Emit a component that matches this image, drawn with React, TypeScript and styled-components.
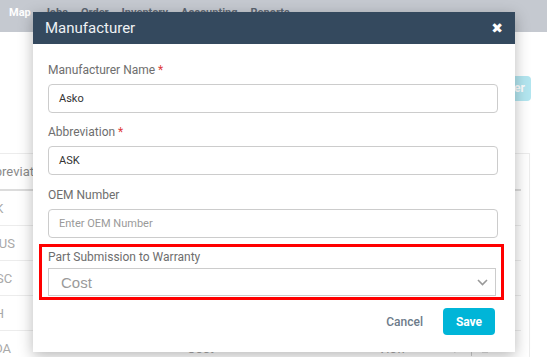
import React from 'react'
import styled, { createGlobalStyle } from 'styled-components'

const GlobalStyle = createGlobalStyle`
  html, body {
    margin: 0;
    padding: 0;
    background: #ffffff;
  }
  body {
    font-family: Roboto, "Liberation Sans", Arial, sans-serif;
  }
`

const Page = styled.div`
  position: relative;
  width: 547px;
  height: 357px;
  overflow: hidden;
  background: #ffffff;
`

const NavBar = styled.nav`
  display: flex;
  align-items: flex-start;
  gap: 13px;
  height: 32px;
  padding: 5px 0 0 9px;
  box-sizing: border-box;
  background: #c5c9d0;
`

const NavItem = styled.span<{ $active?: boolean }>`
  font-size: 11px;
  font-weight: 700;
  line-height: 16px;
  color: ${(p) => (p.$active ? '#ffffff' : '#5b6570')};
`

const Toolbar = styled.div`
  display: flex;
  justify-content: flex-end;
  padding: 44px 16px 0 0;
`

const AddButton = styled.div`
  height: 25px;
  padding: 0 6px 0 10px;
  border-radius: 4px;
  background: #b3e6f0;
  color: #ffffff;
  font-size: 12px;
  font-weight: 700;
  line-height: 25px;
`

const Card = styled.div`
  margin: 52px 17px 0 -38px;
  padding: 0 8px;
  border: 1px solid #ececec;
  background: #ffffff;
`

const Row = styled.div<{ $head?: boolean }>`
  display: grid;
  grid-template-columns: 208px 191px 75px 1fr;
  height: ${(p) => (p.$head ? '35px' : '34px')};
  align-items: center;
  border-bottom: ${(p) => (p.$head ? '2px solid #dcdcdc' : '1px solid #ececec')};
`

const Cell = styled.div<{ $head?: boolean }>`
  padding: 0 8px;
  font-size: 13px;
  color: ${(p) => (p.$head ? '#8a8a8a' : '#a9a9a9')};
  white-space: nowrap;
  overflow: hidden;
`

const Actions = styled.div`
  display: flex;
  align-items: center;
  gap: 8px;
  padding: 0 8px;
  color: #b5b5b5;
`

const Divider = styled.span`
  width: 1px;
  height: 16px;
  background: #cfcfcf;
`

const Modal = styled.div`
  position: absolute;
  left: 33px;
  top: 12px;
  width: 482px;
  height: 340px;
  background: #ffffff;
  box-shadow: 0 4px 14px rgba(0, 0, 0, 0.28);
  display: flex;
  flex-direction: column;
`

const ModalHeader = styled.div`
  display: flex;
  align-items: center;
  justify-content: space-between;
  height: 32px;
  padding: 0 12px 0 12px;
  background: #34495e;
`

const Title = styled.h4`
  margin: 0;
  font-size: 15px;
  font-weight: 400;
  color: #eef1f4;
`

const Close = styled.span`
  font-family: "DejaVu Sans", sans-serif;
  font-size: 14px;
  color: #ffffff;
  line-height: 1;
`

const ModalBody = styled.div`
  display: flex;
  flex-direction: column;
  padding: 18px 17px 0 15px;
`

const Field = styled.div<{ $gap?: number }>`
  display: flex;
  flex-direction: column;
  margin-bottom: ${(p) => p.$gap ?? 11}px;
`

const Label = styled.label`
  font-size: 12px;
  line-height: 16px;
  color: #6e6e6e;
  margin-bottom: 6px;
`

const Req = styled.span`
  color: #e03b3b;
`

const Input = styled.div<{ $placeholder?: boolean }>`
  height: 29px;
  box-sizing: border-box;
  border: 1px solid #cccccc;
  border-radius: 4px;
  padding: 0 10px;
  display: flex;
  align-items: center;
  font-size: 11px;
  color: ${(p) => (p.$placeholder ? '#9a9a9a' : '#333333')};
`

const Highlight = styled.div`
  margin: 0 -6px 0 -9px;
  padding: 2px 5px 1px 6px;
  border: 3px solid #ff0000;
  display: flex;
  flex-direction: column;
`

const HighlightLabel = styled(Label)`
  margin-bottom: 3px;
`

const Select = styled.div`
  height: 28px;
  box-sizing: border-box;
  border: 1px solid #cccccc;
  display: flex;
  align-items: center;
  justify-content: space-between;
  padding: 0 7px 0 12px;
  font-family: "Liberation Sans", Arial, sans-serif;
  font-size: 15px;
  color: #9a9a9a;
`

const Footer = styled.div`
  display: flex;
  justify-content: flex-end;
  align-items: center;
  gap: 20px;
  padding: 8px 20px 0 0;
`

const CancelButton = styled.span`
  font-size: 12px;
  font-weight: 500;
  color: #6d7b8a;
`

const SaveButton = styled.div`
  width: 52px;
  height: 27px;
  border-radius: 4px;
  background: #00b5d8;
  color: #ffffff;
  font-size: 12px;
  font-weight: 700;
  display: flex;
  align-items: center;
  justify-content: center;
`

const rows = [
  { abbr: 'ASK', sub: 'Cost', view: 'View' },
  { abbr: 'AMUS', sub: 'Cost', view: 'View' },
  { abbr: 'BOSC', sub: 'Cost', view: 'View' },
  { abbr: 'BSH', sub: 'Cost', view: 'View' },
  { abbr: 'FRDA', sub: 'Cost', view: 'View' },
]

const Chevron = () => (
  <svg width="11" height="7" viewBox="0 0 11 7">
    <polyline points="1,1 5.5,5.5 10,1" fill="none" stroke="#999999" strokeWidth="1.6" />
  </svg>
)

const Pencil = () => (
  <svg width="10" height="10" viewBox="0 0 10 10">
    <path d="M1 9 L1.5 6.5 L7 1 L9 3 L3.5 8.5 Z" fill="none" stroke="#bbbbbb" strokeWidth="1" />
  </svg>
)

const Trash = () => (
  <svg width="10" height="10" viewBox="0 0 10 10">
    <rect x="2" y="3" width="6" height="6.5" fill="#c4c4c4" />
    <rect x="1" y="1.5" width="8" height="1" fill="#c4c4c4" />
  </svg>
)

const App: React.FC = () => {
  return (
    <Page>
      <GlobalStyle />
      <NavBar>
        <NavItem $active>Map</NavItem>
        <NavItem>Jobs</NavItem>
        <NavItem>Order</NavItem>
        <NavItem>Inventory</NavItem>
        <NavItem>Accounting</NavItem>
        <NavItem>Reports</NavItem>
      </NavBar>

      <Toolbar>
        <AddButton>Add Manufacturer</AddButton>
      </Toolbar>

      <Card>
        <Row $head>
          <Cell $head>Abbreviation</Cell>
          <Cell $head>Part Submission</Cell>
          <Cell $head>Detail</Cell>
          <Cell $head>Action</Cell>
        </Row>
        {rows.map((r) => (
          <Row key={r.abbr}>
            <Cell>{r.abbr}</Cell>
            <Cell>{r.sub}</Cell>
            <Cell>{r.view}</Cell>
            <Actions>
              <Pencil />
              <Divider />
              <Trash />
            </Actions>
          </Row>
        ))}
      </Card>

      <Modal>
        <ModalHeader>
          <Title>Manufacturer</Title>
          <Close>✖</Close>
        </ModalHeader>
        <ModalBody>
          <Field>
            <Label>
              Manufacturer Name <Req>*</Req>
            </Label>
            <Input>Asko</Input>
          </Field>
          <Field $gap={12}>
            <Label>
              Abbreviation <Req>*</Req>
            </Label>
            <Input>ASK</Input>
          </Field>
          <Field $gap={6}>
            <Label>OEM Number</Label>
            <Input $placeholder>Enter OEM Number</Input>
          </Field>
          <Highlight>
            <HighlightLabel>Part Submission to Warranty</HighlightLabel>
            <Select>
              Cost
              <Chevron />
            </Select>
          </Highlight>
        </ModalBody>
        <Footer>
          <CancelButton>Cancel</CancelButton>
          <SaveButton>Save</SaveButton>
        </Footer>
      </Modal>
    </Page>
  )
}

export default App
